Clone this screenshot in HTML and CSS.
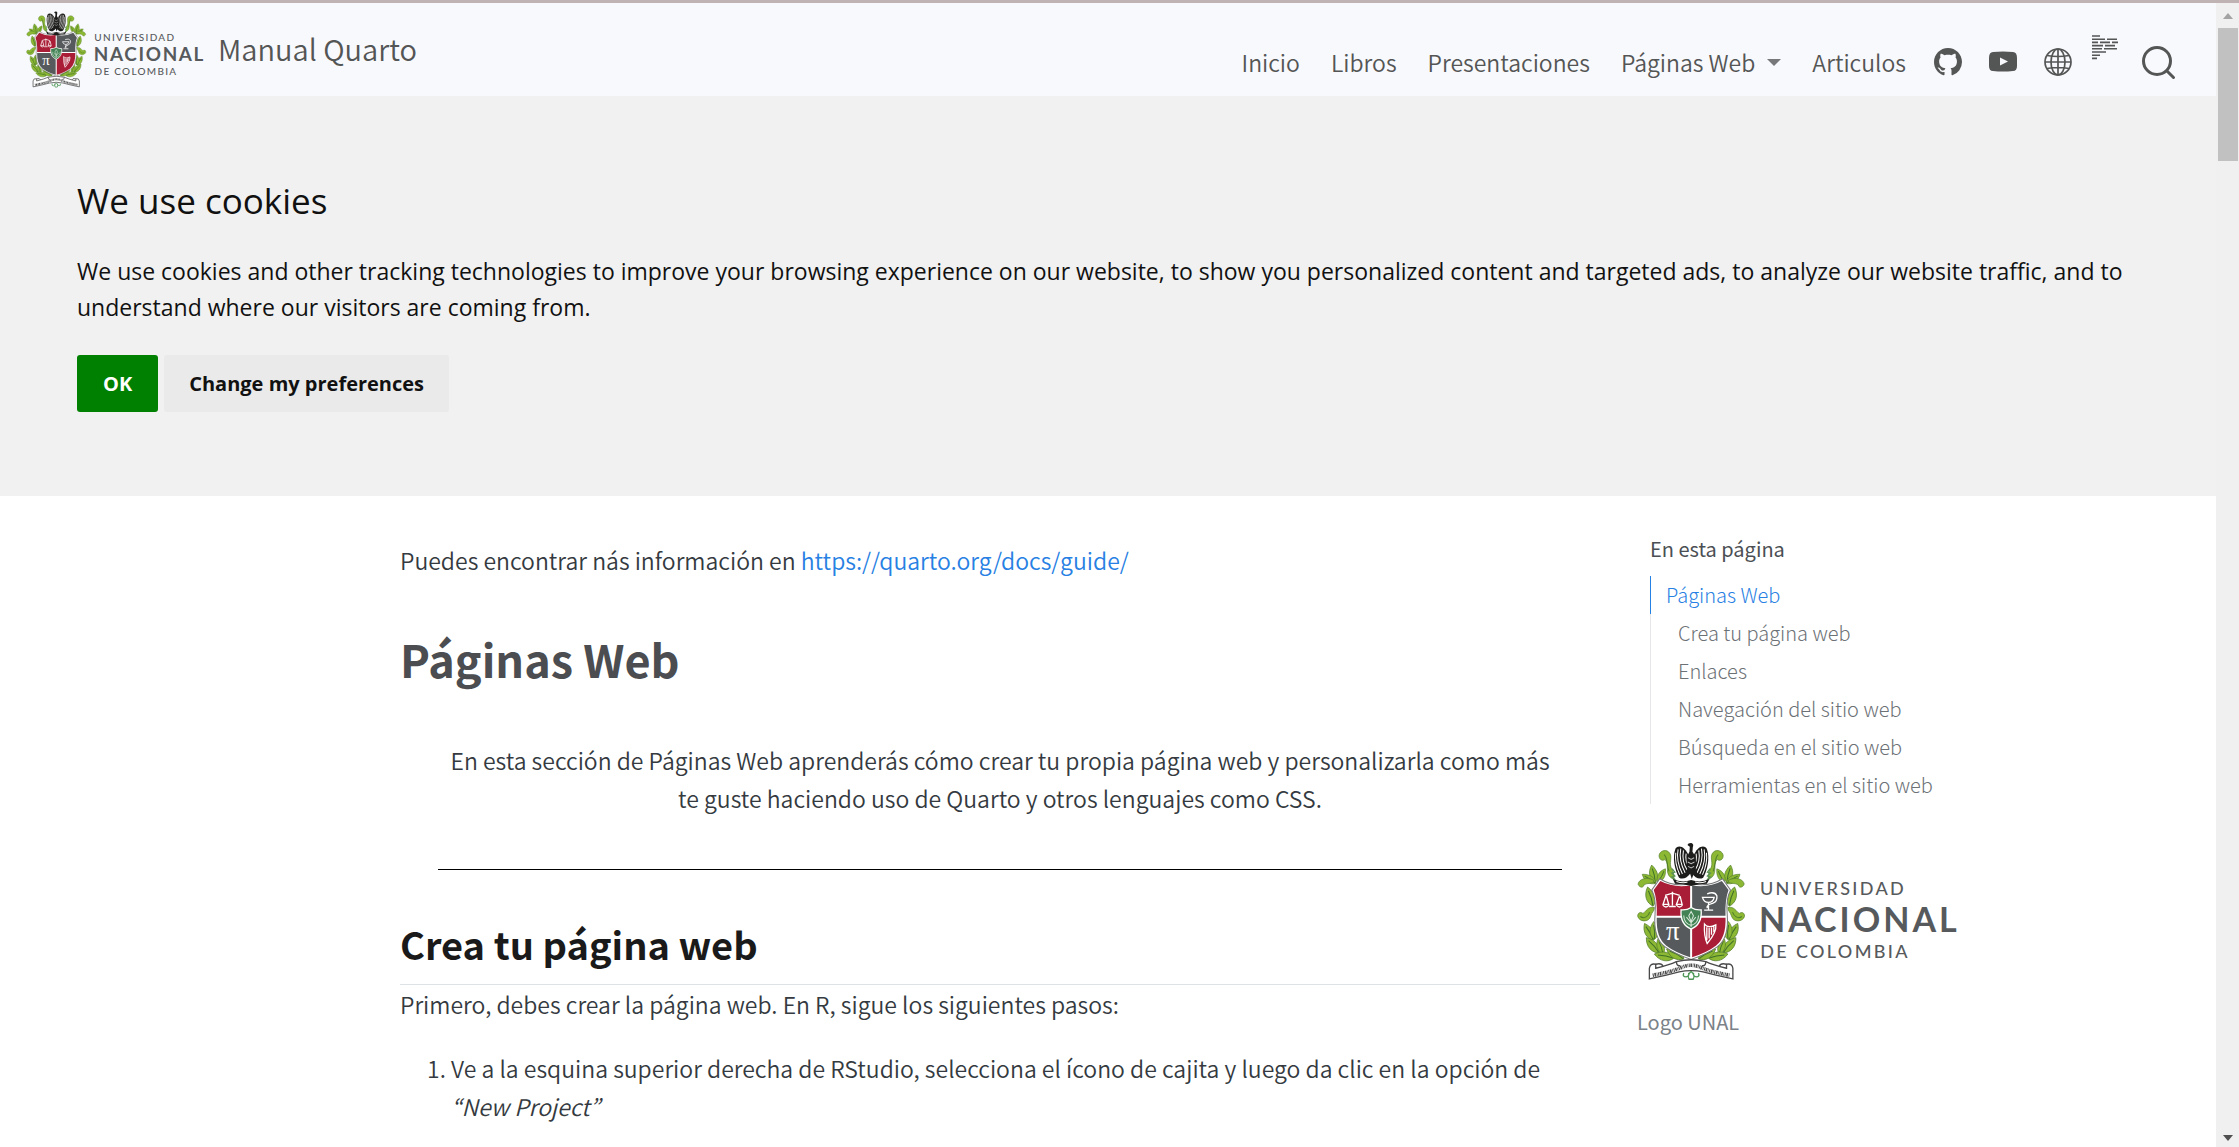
FILE: index.html
```html
<!DOCTYPE html>
<html lang="es">
<head>
<meta charset="utf-8">
<meta name="viewport" content="width=device-width, initial-scale=1">
<title>Manual Quarto</title>
<link rel="stylesheet" href="styles.css">
</head>
<body>
<svg class="defs" aria-hidden="true">
  <defs>
    <path id="leaf" d="M0 0C15 -10 17 -32 2 -54C-15 -36 -15 -14 0 0Z"/>
    <g id="leaf-veined"><use href="#leaf" fill="#8cb833" stroke="#567f2c" stroke-width="2"/><path d="M0 -2C3 -16 3 -30 1 -44" fill="none" stroke="#3f6f2a" stroke-width="3"/></g>
    <g id="garland">
      <path d="M160 182C128 168 150 140 134 122C128 128 116 124 116 111C117 98 134 90 145 100C160 114 142 134 155 152C160 163 162 172 160 182Z" fill="#8cb833" stroke="#567f2c" stroke-width="2"/>
      <path d="M131 108C142 116 138 138 146 158" fill="none" stroke="#4f7d2b" stroke-width="3"/>
      <path d="M155 150l8 10l-9 3l9 9l-9 3l11 8" fill="none" stroke="#5b9355" stroke-width="4"/>
      <use href="#leaf-veined" transform="translate(105 192) rotate(-14)"/>
      <use href="#leaf-veined" transform="translate(112 190) rotate(28) scale(.85)"/>
      <use href="#leaf-veined" transform="translate(106 194) rotate(-58) scale(.9)"/>
      <path d="M100 184C80 174 56 180 53 196C57 208 70 208 71 198C82 192 91 196 100 190Z" fill="#8cb833" stroke="#567f2c" stroke-width="2"/>
      <use href="#leaf-veined" transform="translate(98 262) rotate(-18) scale(1.1)"/>
      <path d="M102 266C83 262 77 278 68 284C60 278 52 282 52 292C56 310 86 312 91 292C95 278 102 278 102 266Z" fill="#8cb833" stroke="#567f2c" stroke-width="2"/>
      <path d="M60 293C72 302 84 292 88 280" fill="none" stroke="#4f7d2b" stroke-width="3"/>
      <use href="#leaf-veined" transform="translate(99 364) rotate(-30) scale(1.05)"/>
      <use href="#leaf-veined" transform="translate(102 362) rotate(-4)"/>
      <use href="#leaf-veined" transform="translate(116 402) rotate(-42) scale(1.1)"/>
      <use href="#leaf-veined" transform="translate(128 405) rotate(-20) scale(.9)"/>
      <use href="#leaf-veined" transform="translate(160 418) rotate(-80) scale(1.1)"/>
      <use href="#leaf-veined" transform="translate(190 420) rotate(-62) scale(1.1)"/>
    </g>
    <g id="wing">
      <path d="M205 112C195 84 174 76 165 90C155 116 163 154 176 177C188 184 201 176 209 164Z" fill="#1d1d1b"/>
      <path d="M166 102C163 126 169 148 178 168M173 92C168 116 174 142 186 166M181 90C176 116 182 140 194 162M189 95C185 118 190 138 200 154M197 105C194 122 199 136 206 146" fill="none" stroke="#fff" stroke-width="3"/>
    </g>
    <symbol id="unal" viewBox="50 70 970 416">
      <use href="#garland"/>
      <use href="#garland" transform="translate(424 0) scale(-1 1)"/>
      <path d="M118 180Q160 206 212 194Q264 206 306 180L330 214Q316 240 320 286Q326 358 290 384Q262 404 212 422Q162 404 134 384Q98 358 104 286Q108 240 94 214Z" fill="#fff" stroke="#77797a" stroke-width="3"/>
      <path d="M120 187Q160 208 209 200V291H109Q111 243 100 214Z" fill="#a91e36"/>
      <path d="M304 187Q264 208 215 200V291H315Q313 243 324 214Z" fill="#575a5c"/>
      <path d="M109 297H209V415Q164 401 137 380Q107 356 109 297Z" fill="#575a5c"/>
      <path d="M315 297H215V415Q260 401 287 380Q317 356 315 297Z" fill="#a91e36"/>
      <g fill="none" stroke="#fff" stroke-width="4">
        <path d="M134 230L156 223L178 230M156 219V260M146 263H166M136 232L128 257H145L138 232M177 232L168 257H185L179 232"/>
        <path d="M127 259Q137 270 146 259M168 259Q177 270 186 259"/>
        <path d="M246 236H281Q278 251 264 251Q250 251 246 236ZM264 251V272M251 274H278M260 225Q283 217 289 231Q292 247 276 254Q257 259 260 268"/>
        <path d="M252 316Q263 330 286 318Q289 340 260 374Q250 352 252 316ZM259 325V364M266 327V359M273 326V348M280 323V340"/>
      </g>
      <text class="mark-pi" x="157" y="362" text-anchor="middle">π</text>
      <path d="M182 273Q198 275 212 266Q226 275 242 273Q246 316 212 331Q178 316 182 273Z" fill="#438255" stroke="#fff" stroke-width="4"/>
      <path d="M212 278L219 291L212 308L205 291ZM190 290Q190 313 212 320Q234 313 234 290M198 295L212 312L226 295M212 308V325" fill="none" stroke="#d8e9da" stroke-width="3"/>
      <use href="#wing"/>
      <use href="#wing" transform="translate(424 0) scale(-1 1)"/>
      <path d="M201 79Q203 72 213 73Q221 76 217 86L216 99Q230 115 226 151L234 174L220 165L214 181L209 165L193 176L200 150Q195 117 207 99L208 84Z" fill="#1d1d1b"/>
      <path d="M203 117l9 5l9-5M202 130l10 5l10-5M203 143l9 5l9-5" fill="none" stroke="#bbb" stroke-width="3"/>
      <path d="M157 181Q185 194 212 184Q240 194 267 181L259 195Q236 195 212 202Q188 195 164 195Z" fill="#1d1d1b"/>
      <path d="M168 188Q188 195 201 190M224 190Q239 195 257 188" fill="none" stroke="#fff" stroke-width="3"/>
      <path d="M106 436Q89 432 87 448V480Q144 468 176 459Q212 451 248 459Q280 468 337 480V448Q335 432 318 436L318 448Q277 438 256 428Q212 417 168 428Q147 438 106 448Z" fill="#fff" stroke="#4a4a4a" stroke-width="4"/>
      <path d="M106 436Q124 431 128 443M318 436Q300 431 296 443M168 428Q168 443 180 440M256 428Q256 443 244 440" fill="none" stroke="#4a4a4a" stroke-width="4"/>
      <path d="M97 469Q160 457 187 444Q212 434 237 444Q264 457 328 469" fill="none" stroke="#4a4a4a" stroke-width="11" stroke-dasharray="3 2 5 2 2 2"/>
      <path d="M190 462Q185 474 197 474Q209 470 204 462M234 462Q239 474 227 474Q215 470 220 462M212 458Q198 470 206 481H218Q226 470 212 458Z" fill="none" stroke="#4d9655" stroke-width="4"/>
      <g class="mark-text">
        <text class="mark-small" x="418" y="230">UNIVERSIDAD</text>
        <text class="mark-large" x="415" y="339">NACIONAL</text>
        <text class="mark-small" x="419" y="416">DE COLOMBIA</text>
      </g>
    </symbol>
  </defs>
</svg>

<div class="window">
  <div class="page">
    <header class="navbar">
      <a class="brand" href="#">
        <svg class="brand-logo" role="img" aria-label="Universidad Nacional de Colombia"><use href="#unal"/></svg>
        <span class="brand-title">Manual Quarto</span>
      </a>
      <nav class="nav" aria-label="Principal">
        <a href="#">Inicio</a>
        <a href="#">Libros</a>
        <a href="#">Presentaciones</a>
        <a class="has-menu" href="#">Páginas Web</a>
        <a href="#">Articulos</a>
      </nav>
      <div class="tools">
        <a href="#" aria-label="GitHub"><svg width="28" height="28" viewBox="0 0 16 16" fill="currentColor"><path d="M8 0C3.58 0 0 3.58 0 8c0 3.54 2.29 6.53 5.47 7.59.4.07.55-.17.55-.38 0-.19-.01-.82-.01-1.49-2.01.37-2.53-.49-2.69-.94-.09-.23-.48-.94-.82-1.13-.28-.15-.68-.52-.01-.53.63-.01 1.08.58 1.23.82.72 1.21 1.87.87 2.33.66.07-.52.28-.87.51-1.07-1.78-.2-3.64-.89-3.64-3.95 0-.87.31-1.59.82-2.15-.08-.2-.36-1.02.08-2.12 0 0 .67-.21 2.2.82.64-.18 1.32-.27 2-.27s1.36.09 2 .27c1.53-1.04 2.2-.82 2.2-.82.44 1.1.16 1.92.08 2.12.51.56.82 1.27.82 2.15 0 3.07-1.87 3.75-3.65 3.95.29.25.54.73.54 1.48 0 1.07-.01 1.93-.01 2.2 0 .21.15.46.55.38A8.01 8.01 0 0 0 16 8c0-4.42-3.58-8-8-8z"/></svg></a>
        <a href="#" aria-label="YouTube"><svg width="28" height="28" viewBox="0 0 28 28"><path d="M4 4Q14 3 24 4Q28 4 28 10V18Q28 23 24 23Q14 24 4 23Q0 23 0 18V10Q0 4 4 4Z" fill="currentColor"/><path d="M11 9.500L19 13.500L11 17.500Z" fill="#f8f9fc"/></svg></a>
        <a href="#" aria-label="Sitio web"><svg width="28" height="28" viewBox="0 0 28 28" fill="none" stroke="currentColor" stroke-width="1.700"><circle cx="14" cy="14" r="13"/><ellipse cx="14" cy="14" rx="7" ry="13"/><path d="M14 1V27M1 14H27M3 7.500Q14 9.500 25 7.500M3 20.500Q14 18.500 25 20.500"/></svg></a>
        <a class="raised" href="#" aria-label="Prettier"><svg width="28" height="28" viewBox="0 0 28 28" fill="none" stroke="currentColor" stroke-width="1.600"><path d="M1 2H9M1 5.200H14M16 5.200H26M1 8.400H7M9 8.400H19M21 8.400H27M1 11.600H12M14 11.600H24M1 14.800H11M13 14.800H26M1 18H15M1 21.200H9M1 24.400H6"/></svg></a>
        <button class="search" type="button" aria-label="Buscar"><svg width="34" height="34" viewBox="0 0 34 34" fill="none" stroke="currentColor" stroke-width="3" stroke-linecap="round"><circle cx="15" cy="15" r="13.500"/><path d="M25 25L31.500 31.500"/></svg></button>
      </div>
    </header>

    <section class="cookies" aria-labelledby="cookies-title">
      <h2 id="cookies-title">We use cookies</h2>
      <p>We use cookies and other tracking technologies to improve your browsing experience on our website, to show you personalized content and targeted ads, to analyze our website traffic, and to understand where our visitors are coming from.</p>
      <div class="cookie-actions">
        <button class="accept" type="button">OK</button>
        <button class="prefs" type="button">Change my preferences</button>
      </div>
    </section>

    <div class="layout">
      <main class="content">
        <p>Puedes encontrar nás información en <a href="https://quarto.org/docs/guide/">https://quarto.org/docs/guide/</a></p>
        <h1>Páginas Web</h1>
        <div class="intro">
          <p>En esta sección de Páginas Web aprenderás cómo crear tu propia página web y personalizarla como más te guste haciendo uso de Quarto y otros lenguajes como CSS.</p>
          <hr>
        </div>
        <h2>Crea tu página web</h2>
        <p>Primero, debes crear la página web. En R, sigue los siguientes pasos:</p>
        <ol>
          <li>Ve a la esquina superior derecha de RStudio, selecciona el ícono de cajita y luego da clic en la opción de <em>“New Project”</em></li>
        </ol>
      </main>
      <aside class="margin">
        <nav class="toc" aria-labelledby="toc-title">
          <h2 id="toc-title">En esta página</h2>
          <ul>
            <li class="active"><a href="#">Páginas Web</a></li>
            <li><a href="#">Crea tu página web</a></li>
            <li><a href="#">Enlaces</a></li>
            <li><a href="#">Navegación del sitio web</a></li>
            <li><a href="#">Búsqueda en el sitio web</a></li>
            <li><a href="#">Herramientas en el sitio web</a></li>
          </ul>
        </nav>
        <figure>
          <svg class="figure-logo" viewBox="0 0 970 416" role="img" aria-label="Logo de la Universidad Nacional de Colombia"><use href="#unal"/></svg>
          <figcaption>Logo UNAL</figcaption>
        </figure>
      </aside>
    </div>
  </div>
  <div class="scrollbar" aria-hidden="true">
    <span class="arrow up"></span>
    <span class="thumb"></span>
    <span class="arrow down"></span>
  </div>
</div>
</body>
</html>
```
FILE: styles.css
```css
* { box-sizing: border-box; }

body {
  margin: 0;
  background: #fff;
  color: #343a40;
  font-family: "Noto Sans CJK KR", "Noto Sans", sans-serif;
  font-size: 23px;
  font-weight: 350;
  line-height: 38px;
}

a { color: inherit; text-decoration: none; }
h1, h2, p, ol, ul, figure { margin: 0; padding: 0; }
button { border: 0; font: inherit; cursor: pointer; }
svg { display: block; }
.defs { position: absolute; width: 0; height: 0; }

.window {
  display: flex;
  height: 100vh;
  overflow: hidden;
  border-top: 3px solid #bfb3b4;
}
.page { flex: 1; min-width: 0; }

/* Navigation bar */
.navbar {
  display: flex;
  align-items: center;
  height: 93px;
  padding: 0 40px 0 26px;
  background: #f8f9fc;
  color: #545555;
}
.brand { display: flex; align-items: center; gap: 12px; margin-right: auto; }
.brand-logo { width: 180px; height: 77px; }
.brand-title { padding-bottom: 4px; font-size: 29px; }
.nav { display: flex; gap: 31px; padding-top: 24px; }
.has-menu { display: flex; align-items: center; gap: 12px; }
.has-menu::after {
  content: "";
  margin-top: 2px;
  border: 7px solid transparent;
  border-top-color: #77787a;
  border-bottom: 0;
}
.tools { display: flex; align-items: center; gap: 27px; margin-left: 28px; padding-top: 24px; }
.raised { align-self: flex-start; margin: -10px -4px 0 -8px; }
.search { margin-top: 2px; padding: 0; background: none; color: inherit; }

.mark-text { fill: #575a5c; font-family: Lato, sans-serif; }
.mark-small { font-size: 54px; font-weight: 500; letter-spacing: 7px; }
.mark-large { font-size: 102px; font-weight: 700; letter-spacing: 9px; }
.mark-pi { fill: #fff; font-family: "Liberation Serif", serif; font-size: 80px; }

/* Cookie notice */
.cookies {
  height: 400px;
  padding: 80px 77px;
  background: #f1f1f1;
  color: #111;
  font-family: "Open Sans", "Noto Sans", sans-serif;
  font-weight: 400;
}
.cookies h2 { margin-bottom: 27px; font-size: 35px; font-weight: 500; line-height: 50px; }
.cookies p { font-size: 23px; line-height: 36px; }
.cookie-actions { display: flex; gap: 6px; margin-top: 30px; }
.cookie-actions button { height: 57px; border-radius: 3px; font-size: 20px; font-weight: 700; }
.accept { padding: 0 26px; background: green; color: #fff; }
.prefs { padding: 0 25px; background: #eaeaea; color: #111; }

/* Article and margin column */
.layout {
  display: grid;
  grid-template-columns: 400fr 1200fr 37fr 324fr 255fr;
}
.content { grid-column: 2; padding-top: 45px; }
.content a { color: #2780e3; }
.content h1 { margin: 52px 0 54px; font-size: 45px; line-height: 56px; color: #4b4d50; }
.intro { padding: 0 38px; text-align: center; }
.intro hr { margin: 52px 0 0; border: 0; border-top: 1px solid #000; }
.content h2 {
  margin: 46px 0 0;
  padding-bottom: 12px;
  border-bottom: 1px solid #dee2e6;
  font-size: 38px;
  line-height: 56px;
  color: #1a1a1a;
}
.content ol { margin-top: 26px; padding-left: 51px; }

.margin { grid-column: 4; padding-top: 34px; }
.toc { padding-left: 13px; font-size: 20px; }
.toc h2 { margin-bottom: 8px; font-size: 20px; font-weight: 400; color: #4b4f54; }
.toc ul { list-style: none; }
.toc li { padding-left: 27px; border-left: 1px solid #e4e6e9; font-weight: 300; color: #6c7176; }
.toc .active { padding-left: 15px; border-color: #2780e3; color: #2780e3; }
figure { margin-top: 38px; }
.figure-logo { width: 100%; height: auto; }
figcaption { margin-top: 22px; font-size: 20px; font-weight: 400; color: #7b8288; }

/* Scroll bar */
.scrollbar {
  display: flex;
  flex-direction: column;
  align-items: center;
  width: 23px;
  padding: 10px 0 6px;
  background: #f0f0f0;
}
.arrow { border: 5px solid transparent; }
.up { border-top: 0; border-bottom: 6px solid #a3a3a3; }
.down { margin-top: auto; border-bottom: 0; border-top: 6px solid #505050; }
.thumb { width: 20px; height: 133px; margin-top: 9px; background: #c1c1c1; }
```
